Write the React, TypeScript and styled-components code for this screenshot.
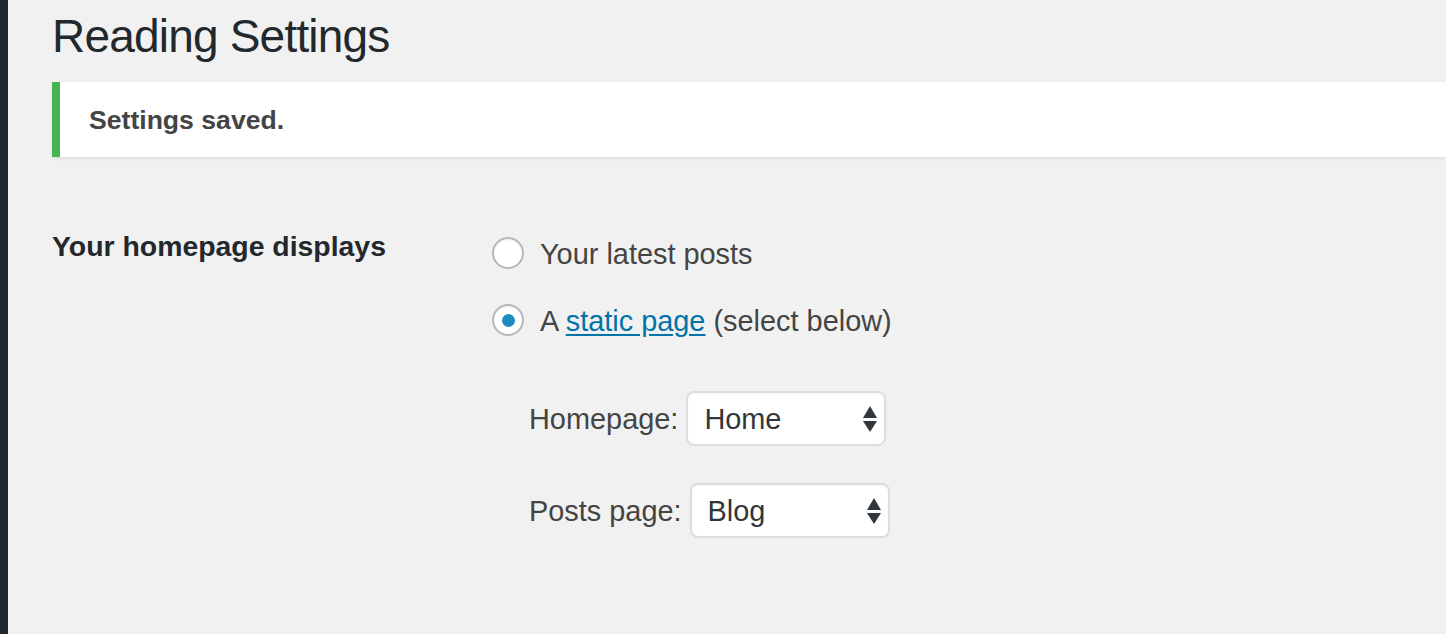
import { FC } from "react";
import styled, { createGlobalStyle } from "styled-components";

const GlobalStyle = createGlobalStyle`
  html, body {
    margin: 0;
    padding: 0;
    background: #f1f1f1;
  }
  body {
    font-family: "Liberation Sans", Arial, Helvetica, sans-serif;
    color: #444;
  }
`;

const Page = styled.div`
  display: flex;
  min-height: 100vh;
  background: #f1f1f1;
  overflow: hidden;
`;

const Sidebar = styled.div`
  flex: 0 0 8px;
  background: #23282d;
`;

const Content = styled.main`
  flex: 1;
  padding: 6px 0 0 44px;
  min-width: 0;
`;

const Title = styled.h1`
  margin: 0;
  font-size: 46px;
  line-height: 60px;
  font-weight: 400;
  letter-spacing: -0.8px;
  color: #23282d;
`;

const Notice = styled.div`
  margin-top: 16px;
  background: #fff;
  border-left: 8px solid #46b450;
  box-shadow: 0 2px 3px rgba(0, 0, 0, 0.08);
  padding: 20px 0 19px 29px;
`;

const NoticeText = styled.p`
  margin: 0;
  font-size: 26.6px;
  line-height: 36px;
  font-weight: 700;
  color: #444;
`;

const FormRow = styled.div`
  display: flex;
  align-items: flex-start;
  margin-top: 69px;
`;

const Th = styled.div`
  flex: 0 0 400px;
  padding-right: 40px;
  font-size: 28.4px;
  line-height: 40px;
  font-weight: 700;
  color: #23282d;
`;

const Td = styled.div`
  padding-top: 8px;
  font-size: 28.9px;
  line-height: 40px;
  color: #444;
`;

const RadioList = styled.div`
  display: flex;
  flex-direction: column;
  gap: 27px;
`;

const RadioRow = styled.label`
  display: flex;
  align-items: center;
  gap: 16px;
  height: 40px;
`;

const Radio = styled.input.attrs({ type: "radio" })`
  appearance: none;
  margin: -2px 0 0;
  width: 32px;
  height: 32px;
  box-sizing: border-box;
  border: 2px solid #b4b9be;
  border-radius: 50%;
  background: #fff;
  box-shadow: inset 0 1px 2px rgba(0, 0, 0, 0.07);
  display: flex;
  align-items: center;
  justify-content: center;

  &:checked::before {
    content: "";
    width: 13px;
    height: 13px;
    border-radius: 50%;
    background: #1e8cbe;
  }
`;

const Link = styled.a`
  color: #0073aa;
  text-decoration: underline;
  text-underline-offset: 3px;
`;

const SelectFieldset = styled.div`
  margin-top: 50px;
  padding-left: 37px;
  display: flex;
  flex-direction: column;
  gap: 37px;
`;

const SelectRow = styled.label`
  display: flex;
  align-items: center;
  gap: 8px;
`;

const SelectWrap = styled.div`
  position: relative;
  width: 200px;
  height: 55px;
`;

const Select = styled.select`
  appearance: none;
  width: 100%;
  height: 100%;
  box-sizing: border-box;
  margin: 0;
  padding: 0 30px 0 16px;
  border: 2px solid #ddd;
  border-radius: 8px;
  background: #fff;
  box-shadow: inset 0 1px 2px rgba(0, 0, 0, 0.04);
  font-family: "Liberation Sans", Arial, sans-serif;
  font-size: 28.9px;
  color: #32373c;
  outline: none;
`;

const Arrows = styled.svg`
  position: absolute;
  right: 9px;
  top: 50%;
  transform: translateY(-50%);
  pointer-events: none;
`;

const SelectArrows: FC = () => (
  <Arrows width="14" height="26" viewBox="0 0 14 26">
    <path d="M7 0 L14 12 L0 12 Z" fill="#32373c" />
    <path d="M0 15 L14 15 L7 26 Z" fill="#32373c" />
  </Arrows>
);

const PageSelect: FC<{ label: string; value: string }> = ({ label, value }) => (
  <SelectRow>
    {label}
    <SelectWrap>
      <Select defaultValue={value}>
        <option value={value}>{value}</option>
      </Select>
      <SelectArrows />
    </SelectWrap>
  </SelectRow>
);

const App: FC = () => {
  return (
    <>
      <GlobalStyle />
      <Page>
        <Sidebar />
        <Content>
          <Title>Reading Settings</Title>
          <Notice>
            <NoticeText>Settings saved.</NoticeText>
          </Notice>

          <FormRow>
            <Th>Your homepage displays</Th>
            <Td>
              <RadioList>
                <RadioRow>
                  <Radio name="show_on_front" value="posts" />
                  Your latest posts
                </RadioRow>
                <RadioRow>
                  <Radio name="show_on_front" value="page" defaultChecked />
                  <span>
                    A <Link href="#">static page</Link> (select below)
                  </span>
                </RadioRow>
              </RadioList>

              <SelectFieldset>
                <PageSelect label="Homepage:" value="Home" />
                <PageSelect label="Posts page:" value="Blog" />
              </SelectFieldset>
            </Td>
          </FormRow>
        </Content>
      </Page>
    </>
  );
};

export default App;
